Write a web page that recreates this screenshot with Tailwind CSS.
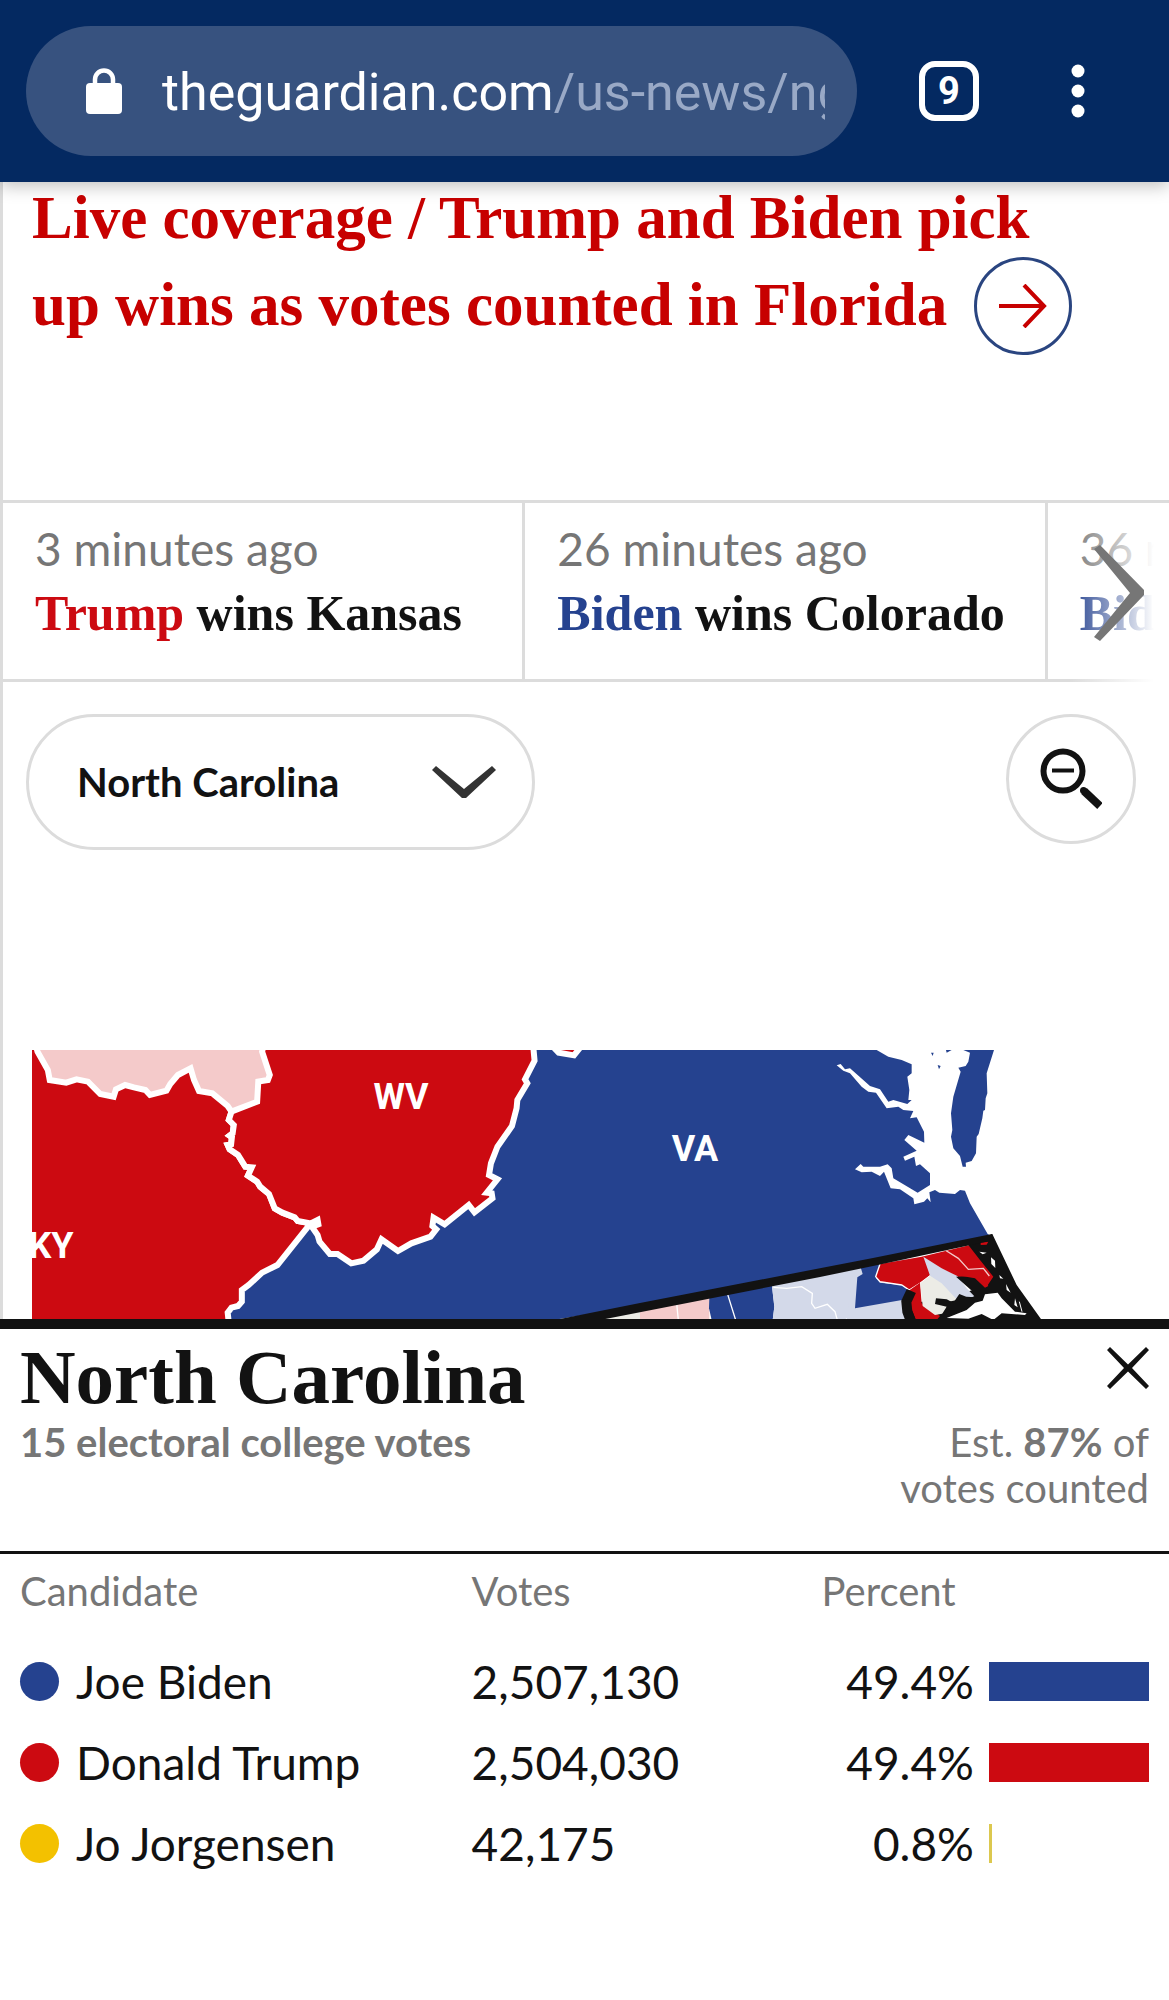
<!DOCTYPE html>
<html lang="en">
  <head>
    <meta charset="UTF-8" />
    <meta name="viewport" content="width=device-width, initial-scale=1.0"/>
    <title>US election results: North Carolina</title>
    <script src="https://cdn.jsdelivr.net/npm/@tailwindcss/browser@4"></script>
  </head>
  <body class="bg-white text-[#121212] font-['Lato',sans-serif] overflow-x-hidden">

    <!-- Browser bar -->
    <header class="relative z-10 flex items-center bg-[#042961] py-[26px] pl-[26px] pr-[84px] shadow-[0_4px_16px_rgba(0,0,0,0.25)]">
      <button type="button" aria-label="Address bar" class="flex h-[130px] min-w-0 flex-1 items-center rounded-full bg-[#37527f] pl-[60px] pr-8 text-left">
        <svg class="h-[46px] w-9 shrink-0" viewBox="0 0 36 46" aria-hidden="true">
          <path d="M9 18V11.500a9 9 0 0 1 18 0V18" fill="none" stroke="#fff" stroke-width="4.500"/>
          <rect x="0" y="15" width="36" height="31" rx="4" fill="#fff"/>
        </svg>
        <span class="ml-10 min-w-0 flex-1 overflow-hidden whitespace-nowrap pt-1 font-['Roboto',sans-serif] text-[52px] leading-[64px] text-[#99a9c6]"><span class="text-white">theguardian.com</span>/us-news/ng</span>
      </button>
      <button type="button" aria-label="Open tabs" class="ml-[62px] flex size-[60px] items-center justify-center rounded-2xl border-[6px] border-white font-['Roboto',sans-serif] text-[38px] font-bold leading-none text-white">9</button>
      <button type="button" aria-label="More options" class="ml-[92px]">
        <svg class="h-[54px] w-3.5" viewBox="0 0 14 54" fill="#fff" aria-hidden="true">
          <circle cx="7" cy="7" r="6.500"/><circle cx="7" cy="27" r="6.500"/><circle cx="7" cy="47" r="6.500"/>
        </svg>
      </button>
    </header>

    <main class="border-l-[3px] border-[#dcdcdc]">
      <!-- Live headline -->
      <h2 class="-mt-2 pl-[29px] pr-20 font-['Liberation_Serif',serif] text-[61px] font-bold leading-[87px] text-[#c70000]">
        <a href="#live">Live coverage / Trump and Biden pick<br>up wins as votes counted in Florida
          <span class="-mb-1.5 -mt-4 ml-3 inline-flex size-[98px] items-center justify-center rounded-full border-[3px] border-[#2a4580] align-middle">
            <svg class="h-11 w-12" viewBox="0 0 48 44" fill="none" stroke="#c70000" stroke-width="4" aria-hidden="true">
              <path d="M0 22H45M25 1L45 22L25 43"/>
            </svg>
          </span>
        </a>
      </h2>

      <!-- Latest calls -->
      <section class="relative mt-[151px] border-t-[3px] border-[#dcdcdc]">
        <ul class="flex overflow-hidden">
          <li class="w-[44.8%] shrink-0 whitespace-nowrap border-b-[3px] border-r-[3px] border-[#dcdcdc] pb-[34px] pl-8 pt-3.5">
            <p class="text-[46px] leading-[64px] text-[#767676]">3 minutes ago</p>
            <p class="font-['Liberation_Serif',serif] text-[50px] font-bold leading-[64px]"><span class="text-[#cc0a11]">Trump</span> wins Kansas</p>
          </li>
          <li class="w-[44.8%] shrink-0 whitespace-nowrap border-b-[3px] border-r-[3px] border-[#dcdcdc] pb-[34px] pl-8 pt-3.5">
            <p class="text-[46px] leading-[64px] text-[#767676]">26 minutes ago</p>
            <p class="font-['Liberation_Serif',serif] text-[50px] font-bold leading-[64px]"><span class="text-[#25428f]">Biden</span> wins Colorado</p>
          </li>
          <li class="w-[44.8%] shrink-0 whitespace-nowrap border-b-[3px] border-r-[3px] border-[#dcdcdc] pb-[34px] pl-8 pt-3.5">
            <p class="text-[46px] leading-[64px] text-[#767676]">36 minutes ago</p>
            <p class="font-['Liberation_Serif',serif] text-[50px] font-bold leading-[64px]"><span class="text-[#25428f]">Biden</span></p>
          </li>
        </ul>
        <button type="button" aria-label="Next" class="absolute -bottom-px right-0 top-0 flex w-[100px] items-center bg-linear-to-r from-white/0 to-white to-85% pl-[25px]">
          <svg class="h-24 w-[50px]" viewBox="0 0 50 96" fill="#767676" aria-hidden="true">
            <path d="M0 4L6 0L50 45V50L6 96L0 92L36 48Z"/>
          </svg>
        </button>
      </section>

      <!-- Map controls -->
      <div class="flex items-start justify-between pl-[23px] pr-[33px] pt-8">
        <div class="relative w-[509px]">
          <select aria-label="State" class="h-[136px] w-full appearance-none rounded-full border-[3px] border-[#dcdcdc] bg-white pl-12 text-[40px] font-bold">
            <option>North Carolina</option>
          </select>
          <svg class="pointer-events-none absolute right-[39px] top-[52px] h-8 w-16" viewBox="0 0 64 32" fill="#333" aria-hidden="true">
            <path d="M0 4L4 0L32 23L60 0L64 4L34 32H30Z"/>
          </svg>
        </div>
        <button type="button" aria-label="Zoom out" class="flex size-[130px] items-center justify-center rounded-full border-[3px] border-[#dcdcdc]">
          <svg class="h-[62px] w-[62px]" viewBox="0 0 62 62" fill="none" stroke="#121212" aria-hidden="true">
            <circle cx="23" cy="23" r="19.500" stroke-width="6"/>
            <path d="M12 22.500H34" stroke-width="4"/>
            <path d="M44 43L60 58" stroke-width="8"/>
            <circle cx="43.500" cy="42.500" r="3.500" fill="#121212" stroke="none"/>
          </svg>
        </button>
      </div>

      <!-- Map -->
      <div class="mt-[200px] pl-[29px] pr-8">
        <svg class="block h-auto w-full" viewBox="32 1050 1105 269" role="img" aria-label="Map centred on North Carolina">
          <g transform="translate(820 1030) scale(.33333)">
            <!-- Virginia -->
            <path fill="#25428f" d="M-1900 60H170L205 80L245 90L275 103V130L262 140L268 180L265 210H275L262 222L220 210L205 215L180 178L150 168L90 115L75 118L62 102L50 106L70 122L90 130L125 170L145 185L168 188L200 235L235 230L250 240L280 243L270 265L290 262L312 305L313 338L265 315L253 330L290 362L250 380L255 392L283 380L288 408L300 403L330 430V465L293 488L220 445L215 415L203 403L180 410H130L122 402L105 418L125 427L155 425L180 438L192 425L212 475L240 478L280 505L283 523L312 515L322 505L332 517L328 487L345 480L358 488L405 492L420 480L435 482L450 520L503 612L517 620L0 740L-800 870H-1900Z"/>
            <path fill="#25428f" d="M430 60L450 68L445 95L437 108L415 113L422 125L400 200L393 250L397 300L393 320L400 355L420 378L428 410H438L437 398L455 393L468 370L470 320L476 312L487 265L490 242L495 240L497 205L502 190L500 130L522 60Z"/>
            <path fill="#25428f" d="M333 68H341L338 78ZM353 105L362 108L357 118ZM378 60H395L380 68Z"/>
          </g>
          <!-- Counties, western half -->
          <g transform="translate(540 1030) scale(.33333)">
            <path fill="#ecece6" d="M160 870L300 840V870Z"/>
            <path fill="#f4caca" d="M300 840L508 800V870H300Z"/>
            <path fill="#25428f" d="M508 800L695 760L703 830L698 870H515L507 835Z"/>
            <path fill="#d3d9e9" d="M695 760L1100 680V870H698L703 830Z"/>
            <path fill="none" stroke="#fff" stroke-width="4" d="M410 820L415 870M562 790L587 870M700 772L740 775L785 770L817 790L815 820L825 835L862 823L885 845L892 870M915 870L940 855L947 830"/>
          </g>
          <!-- Counties, eastern half -->
          <g transform="translate(820 1030) scale(.33333)">
            <path fill="#d3d9e9" d="M100 720L245 765L262 790L255 870H80Z"/>
            <path fill="#25428f" d="M122 712L180 700L168 745L180 758L245 765L264 780L246 810L105 835L112 742L128 732Z"/>
            <path fill="#cc0a11" d="M180 702L305 680L450 645L525 740L500 775L440 745L330 735L300 760L268 780L245 765L180 755L167 740Z"/>
            <path fill="none" stroke="#fff" stroke-width="4" d="M180 702L167 740L180 755L245 765L268 780L300 760L330 738"/>
            <path fill="#121212" d="M445 645L517 612L590 765L665 870H260L285 820L420 790L500 770L520 740L480 690Z"/>
            <path fill="#cc0a11" d="M266 782L300 758L305 820L360 858L350 870H288L272 830Z"/>
            <path fill="#d3d9e9" d="M310 680L365 715L412 738L440 775L466 802L440 800L410 815L330 737Z"/>
            <path fill="#ecece6" d="M301 760L330 737L365 760L412 810L385 815L375 850L345 855L308 828Z"/>
            <path fill="#121212" d="M408 740L465 738L500 770L515 795L440 835L385 870H355L380 830L345 822L348 805L380 808L400 818L418 792L450 805L470 795Z"/>
            <path fill="#cc0a11" d="M440 715L470 705L505 768L495 773L465 745L425 738Z"/>
            <path fill="none" stroke="#121212" stroke-width="30" d="M274 783L259 815L262 845L272 872"/>
            <path fill="none" stroke="#f4caca" stroke-width="4" d="M375 660L415 685L445 718L490 715L508 738"/>
            <path fill="#cc0a11" d="M482 638L505 635L500 644L482 645Z"/>
            <path fill="#fff" d="M380 864L440 840L465 818L488 812L495 793L533 788L545 805L585 845L620 850L615 855L545 850L520 870L485 852L445 866ZM478 665L500 668L488 673ZM513 682L525 692L526 714L514 702ZM538 735L550 746L540 745ZM558 762L572 788L560 780ZM585 805L593 832L583 825Z"/>
            <path fill="none" stroke="#fff" stroke-width="3" d="M598 815L606 845"/>
          </g>
          <path fill="#121212" d="M555 1320L640 1303L873 1258L992 1234L994 1240L873 1266L820 1277L590 1322Z"/>
          <!-- Kentucky, Ohio and West Virginia -->
          <g transform="translate(0 1030) scale(.38265 .33333)" stroke="#fff" stroke-width="6" stroke-linejoin="miter">
            <path vector-effect="non-scaling-stroke" fill="#cc0a11" d="M60 30H605V245L598 270L611 285L608 310L600 317L606 322L604 343L595 345L600 358L622 375L641 410L658 412L648 437L672 455L680 470L703 492L718 535L738 548L770 562L778 573L812 580L805 590L725 705L685 728L650 765L632 780V815L622 828L605 833L595 848L600 900H60Z"/>
            <path vector-effect="non-scaling-stroke" fill="#cc0a11" d="M605 245L598 270L611 285L608 310L600 317L606 322L604 343L595 345L600 358L622 375L641 410L658 412L648 437L672 455L680 470L703 492L718 535L738 548L770 562L778 573L812 580L830 570L832 583L815 590L830 615L835 635L862 672H882L918 700L950 692L985 658L997 628L1040 663L1075 640L1125 620L1140 598L1130 588L1133 563L1162 583L1225 525L1240 547L1287 505L1285 490L1272 488L1300 448L1278 435L1283 400L1300 350L1338 288L1350 235L1352 210L1378 160L1372 148L1397 92L1392 30H640Z"/>
            <path vector-effect="non-scaling-stroke" fill="#f4caca" d="M90 30L98 65L125 120L130 150L173 158L200 148L230 155L262 192L297 200L303 178L327 165L350 172L380 180L392 195L435 182L445 162L465 135L498 115L507 150L520 183L555 190L595 228L605 245L672 215L675 155L700 150L705 135L685 65L692 30Z"/>
            <path vector-effect="non-scaling-stroke" fill="#cc0a11" d="M1445 50L1460 68L1500 76L1518 50Z"/>
          </g>
          <g fill="#fff" font-family="Roboto, sans-serif" font-weight="700" font-size="36">
            <text x="401" y="1109" text-anchor="middle">WV</text>
            <text x="695" y="1161" text-anchor="middle">VA</text>
            <text x="51" y="1258" text-anchor="middle">KY</text>
          </g>
        </svg>
      </div>
    </main>

    <!-- State result panel -->
    <section class="border-t-[10px] border-[#121212] bg-white">
      <div class="border-b-[3px] border-[#121212] px-5 pb-10 pt-1.5">
        <div class="flex items-start justify-between">
          <h1 class="font-['Liberation_Serif',serif] text-[77px] font-bold leading-[84px]">North Carolina</h1>
          <button type="button" aria-label="Close" class="pt-3">
            <svg class="size-[42px]" viewBox="0 0 42 42" fill="#121212" aria-hidden="true">
              <path d="M0 3L3 0L21 17.500L39 0L42 3L25 21L42 39L39 42L21 24.500L3 42L0 39L17 21Z"/>
            </svg>
          </button>
        </div>
        <div class="flex items-start justify-between text-[40px] leading-[46px] text-[#767676]">
          <p class="font-bold">15 electoral college votes</p>
          <p class="text-right">Est. <b>87%</b> of<br>votes counted</p>
        </div>
      </div>

      <div class="px-5">
        <table class="w-full table-fixed text-left">
          <colgroup>
            <col class="w-[40%]">
            <col class="w-[31%]">
            <col class="w-[13.5%]">
            <col>
          </colgroup>
          <thead class="text-[40px] leading-[46px] text-[#767676]">
            <tr class="h-[87px] align-top">
              <th class="pt-3.5 font-normal">Candidate</th>
              <th class="pt-3.5 font-normal">Votes</th>
              <th colspan="2" class="pt-3.5 font-normal">Percent</th>
            </tr>
          </thead>
          <tbody class="text-[46px] leading-[56px]">
            <tr class="h-[81px]">
              <td><div class="flex items-center gap-[17px]"><span class="size-[39px] rounded-full bg-[#25428f]"></span>Joe Biden</div></td>
              <td>2,507,130</td>
              <td class="text-right">49.4%</td>
              <td class="pl-[15px]"><div class="h-[39px] bg-[#25428f]" style="width: 100%"></div></td>
            </tr>
            <tr class="h-[81px]">
              <td><div class="flex items-center gap-[17px]"><span class="size-[39px] rounded-full bg-[#cc0a11]"></span>Donald Trump</div></td>
              <td>2,504,030</td>
              <td class="text-right">49.4%</td>
              <td class="pl-[15px]"><div class="h-[39px] bg-[#cc0a11]" style="width: 100%"></div></td>
            </tr>
            <tr class="h-[81px]">
              <td><div class="flex items-center gap-[17px]"><span class="size-[39px] rounded-full bg-[#f3c100]"></span>Jo Jorgensen</div></td>
              <td>42,175</td>
              <td class="text-right">0.8%</td>
              <td class="pl-[15px]"><div class="h-[39px] bg-[#dcc84f]" style="width: 1.7%"></div></td>
            </tr>
          </tbody>
        </table>
      </div>
    </section>
  </body>
</html>
